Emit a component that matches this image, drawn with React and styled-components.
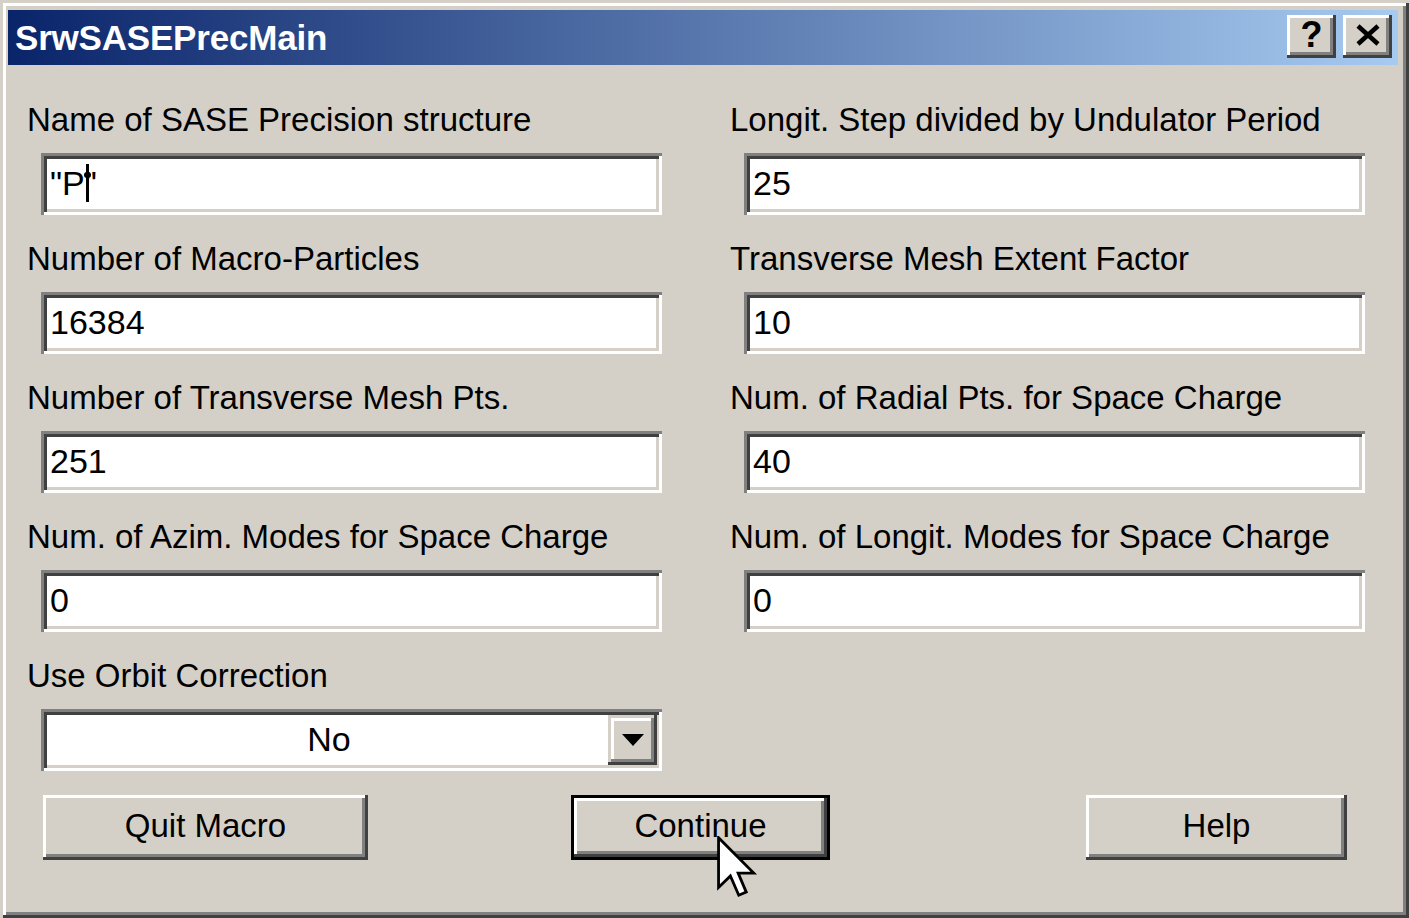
import React from "react";
import styled, { createGlobalStyle } from "styled-components";

const Global = createGlobalStyle`
  html, body { margin: 0; padding: 0; background: #d4d0c8; }
  body { font-family: "Liberation Sans", Arial, sans-serif; }
  * { box-sizing: border-box; }
`;

const Window = styled.div`
  position: relative;
  width: 1409px;
  height: 918px;
  background: #d4d0c8;
  padding: 10px 11px 0 8px;
  box-shadow: inset 3px 3px 0 #d4d0c8, inset -3px -3px 0 #404040,
    inset 6px 6px 0 #ffffff, inset -6px -6px 0 #808080;
  overflow: hidden;
`;

const TitleBar = styled.div`
  height: 55px;
  display: flex;
  align-items: center;
  padding: 0 6px 0 7px;
  background: linear-gradient(to right, #0a246a 0%, #a6caf0 100%);
`;

const Title = styled.div`
  flex: 1;
  color: #ffffff;
  font-family: "Liberation Sans", Arial, sans-serif;
  font-weight: bold;
  font-size: 35px;
  line-height: 40px;
  letter-spacing: -0.2px;
`;

const CaptionButtons = styled.div`
  display: flex;
  gap: 7px;
  margin-top: -2px;
`;

const CaptionButton = styled.div`
  width: 49px;
  height: 43px;
  display: flex;
  align-items: center;
  justify-content: center;
  background: #d4d0c8;
  box-shadow: inset -3px -3px 0 #404040, inset 3px 3px 0 #ffffff,
    inset -6px -6px 0 #808080, inset 6px 6px 0 #d4d0c8;
  font-family: "Liberation Sans", Arial, sans-serif;
  font-weight: bold;
  font-size: 36px;
  color: #000;
  padding-bottom: 3px;
`;

const Content = styled.div`
  padding: 35px 0 0 19px;
`;

const Grid = styled.div`
  display: grid;
  grid-template-columns: 703px 1fr;
  row-gap: 24px;
`;

const Field = styled.div`
  display: flex;
  flex-direction: column;
`;

const Label = styled.div`
  font-family: "Liberation Sans", Arial, sans-serif;
  font-size: 33px;
  line-height: 40px;
  color: #000;
  height: 40px;
  white-space: nowrap;
  margin-bottom: 13px;
`;

const Sunken = styled.div`
  position: relative;
  width: 621px;
  height: 62px;
  margin-left: 14px;
  background: #ffffff;
  box-shadow: inset 3px 3px 0 #808080, inset -3px -3px 0 #ffffff,
    inset 6px 6px 0 #404040, inset -6px -6px 0 #d4d0c8;
  display: flex;
  align-items: center;
  padding: 6px 6px 6px 9px;
`;

const Value = styled.div`
  font-family: "Liberation Sans", Arial, sans-serif;
  font-size: 34px;
  line-height: 40px;
  color: #000;
  flex: 1;
  margin-top: -2px;
  text-align: ${(p) => (p.center ? "center" : "left")};
`;

const IBeam = styled.div`
  position: absolute;
  left: 45px;
  top: 11px;
  width: 3px;
  height: 38px;
  background: #000;
  &::after {
    content: "";
    position: absolute;
    left: -2px;
    top: 8px;
    width: 7px;
    height: 6px;
    border-radius: 3px;
    background: #000;
  }
`;

const DropButton = styled.div`
  width: 49px;
  height: 50px;
  margin-right: -1px;
  background: #d4d0c8;
  box-shadow: inset -3px -3px 0 #404040, inset 3px 3px 0 #d4d0c8,
    inset -6px -6px 0 #808080, inset 6px 6px 0 #ffffff;
  display: flex;
  align-items: center;
  justify-content: center;
`;

const ButtonRow = styled.div`
  display: flex;
  padding-left: 16px;
  margin-top: 24px;
`;

const PushButton = styled.div`
  width: ${(p) => p.w}px;
  height: 65px;
  margin-left: ${(p) => p.ml || 0}px;
  display: flex;
  align-items: center;
  justify-content: center;
  background: #d4d0c8;
  font-family: "Liberation Sans", Arial, sans-serif;
  font-size: 33px;
  color: #000;
  padding-bottom: 4px;
  box-shadow: ${(p) =>
    p.isDefault
      ? "inset 0 0 0 3px #000, inset -6px -6px 0 #404040, inset 6px 6px 0 #ffffff, inset -9px -9px 0 #808080"
      : "inset -3px -3px 0 #404040, inset 3px 3px 0 #ffffff, inset -6px -6px 0 #808080, inset 6px 6px 0 #d4d0c8"};
`;

const Pointer = styled.svg`
  position: absolute;
  left: 717px;
  top: 836px;
  pointer-events: none;
`;

function ArrowCursor() {
  return (
    <Pointer width="42" height="64" viewBox="0 0 13.5 20.5">
      <path
        d="M0.5 0.5 L0.5 16.5 L4.3 12.8 L7 19 L9.4 18 L6.8 11.9 L11.8 11.9 Z"
        fill="#ffffff"
        stroke="#000000"
        strokeWidth="0.9"
        strokeLinejoin="miter"
      />
    </Pointer>
  );
}

function CloseIcon() {
  return (
    <svg width="26" height="22" viewBox="0 0 26 22">
      <path d="M3 2 L23 20 M23 2 L3 20" stroke="#000" strokeWidth="4.5" />
    </svg>
  );
}

function DownTriangle() {
  return (
    <svg width="22" height="12" viewBox="0 0 22 12">
      <path d="M0 0 H22 L11 12 Z" fill="#000" />
    </svg>
  );
}

const fields = [
  ["Name of SASE Precision structure", '"P"', true],
  ["Longit. Step divided by Undulator Period", "25"],
  ["Number of Macro-Particles", "16384"],
  ["Transverse Mesh Extent Factor", "10"],
  ["Number of Transverse Mesh Pts.", "251"],
  ["Num. of Radial Pts. for Space Charge", "40"],
  ["Num. of Azim. Modes for Space Charge", "0"],
  ["Num. of Longit. Modes for Space Charge", "0"],
];

export default function App() {
  return (
    <>
      <Global />
      <Window>
        <TitleBar>
          <Title>SrwSASEPrecMain</Title>
          <CaptionButtons>
            <CaptionButton>?</CaptionButton>
            <CaptionButton>
              <CloseIcon />
            </CaptionButton>
          </CaptionButtons>
        </TitleBar>
        <Content>
          <Grid>
            {fields.map(([label, value, caret]) => (
              <Field key={label}>
                <Label>{label}</Label>
                <Sunken>
                  <Value>{value}</Value>
                  {caret && <IBeam />}
                </Sunken>
              </Field>
            ))}
            <Field>
              <Label>Use Orbit Correction</Label>
              <Sunken>
                <Value center>No</Value>
                <DropButton>
                  <DownTriangle />
                </DropButton>
              </Sunken>
            </Field>
          </Grid>
          <ButtonRow>
            <PushButton w={325}>Quit Macro</PushButton>
            <PushButton w={259} ml={203} isDefault>
              Continue
            </PushButton>
            <PushButton w={261} ml={256}>
              Help
            </PushButton>
          </ButtonRow>
        </Content>
        <ArrowCursor />
      </Window>
    </>
  );
}
